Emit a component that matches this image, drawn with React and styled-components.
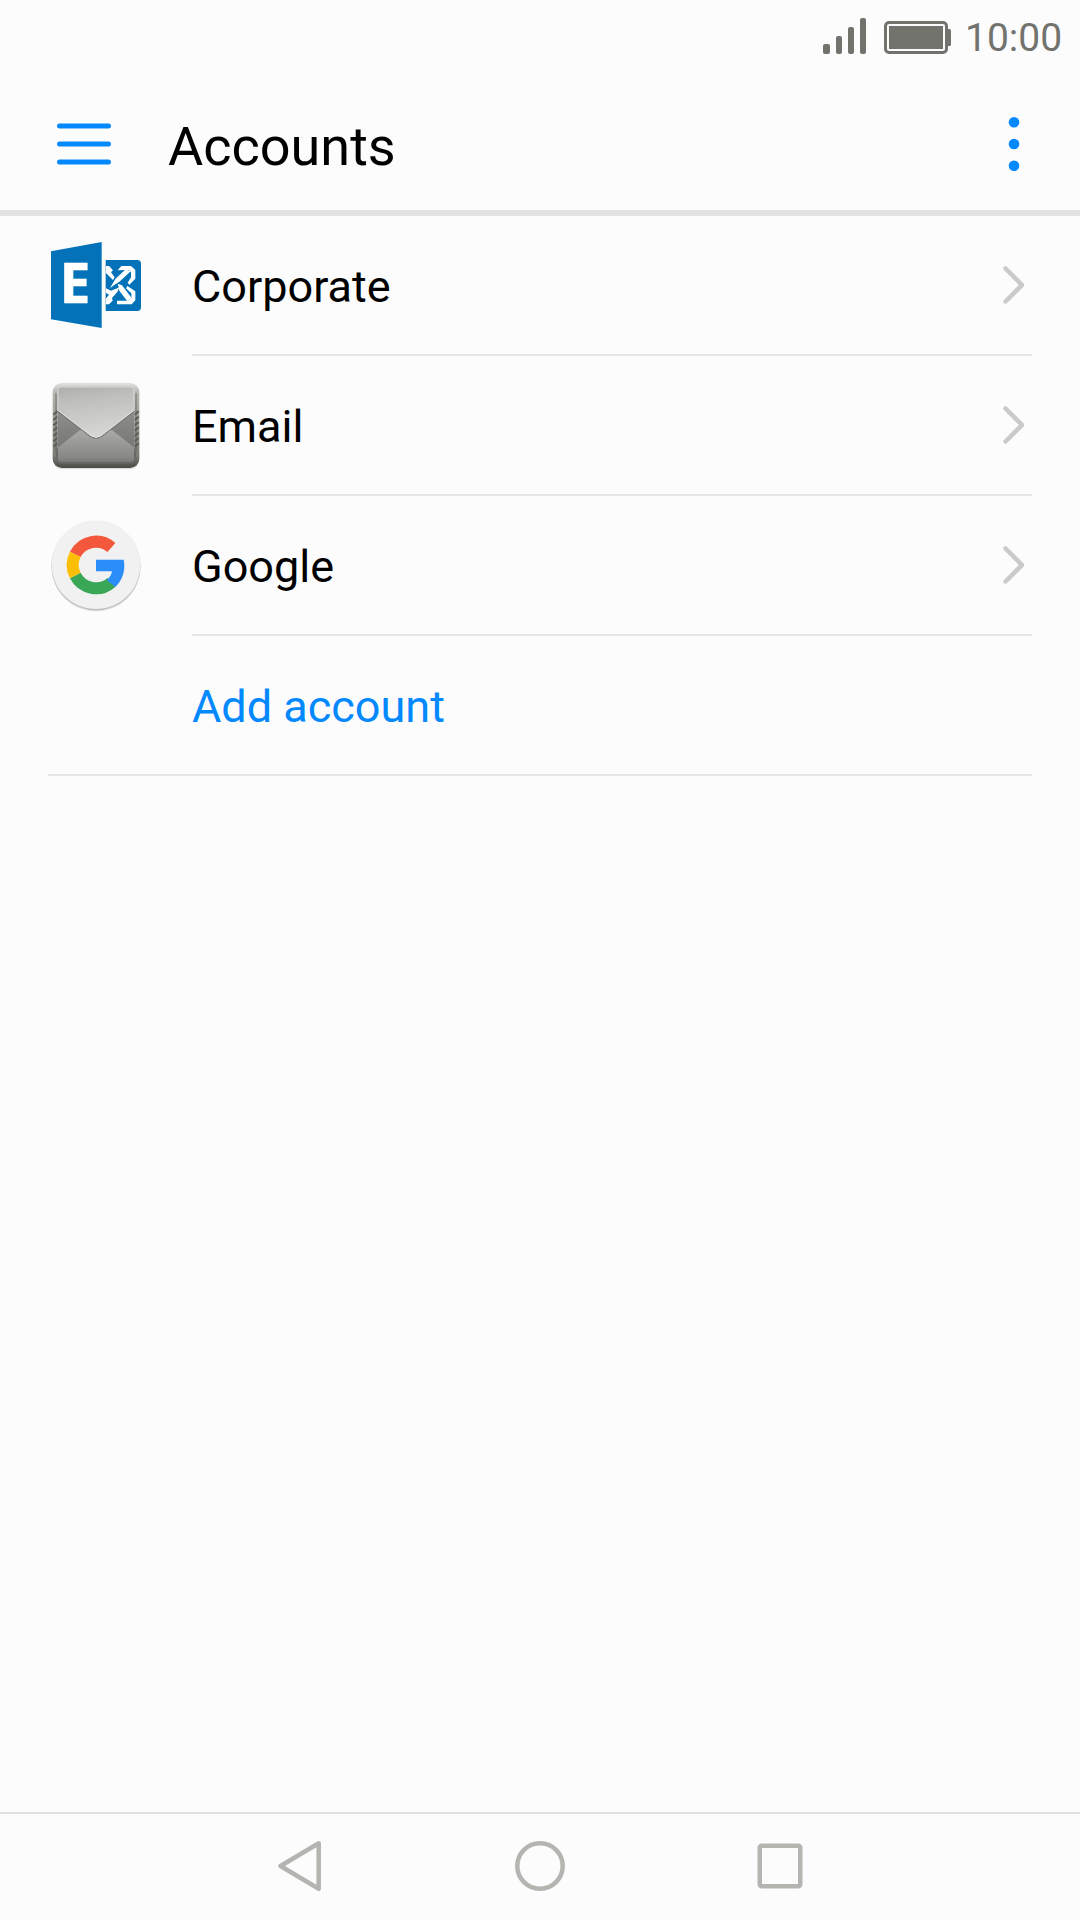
import React from "react";
import styled, { createGlobalStyle } from "styled-components";

const GlobalStyle = createGlobalStyle`
  * {
    box-sizing: border-box;
  }

  body {
    margin: 0;
    background: #fcfcfc;
    font-family: Roboto, "Liberation Sans", sans-serif;
  }

  svg {
    display: block;
    flex-shrink: 0;
  }
`;

const Screen = styled.div`
  width: 1080px;
  height: 1920px;
  display: flex;
  flex-direction: column;
  background: #fcfcfc;
  overflow: hidden;
`;

const StatusBar = styled.div`
  height: 72px;
  padding-right: 18px;
  display: flex;
  align-items: center;
  justify-content: flex-end;
  gap: 14px;
  color: #73736e;
`;

const StatusIcons = styled.div`
  display: flex;
  align-items: flex-end;
  gap: 18px;
`;

const Clock = styled.span`
  width: 97px;
  margin-top: 4px;
  font-size: 39px;
  line-height: 46px;
  white-space: nowrap;
`;

const Header = styled.header`
  height: 144px;
  padding: 6px 60px 0 57px;
  display: flex;
  align-items: center;
  border-bottom: 6px solid #e2e2e2;
`;

const IconButton = styled.button`
  border: 0;
  padding: 0;
  background: none;
  color: #0288ff;
`;

const Title = styled.h1`
  flex: 1;
  margin: 6px 0 0 57px;
  font-size: 54px;
  font-weight: 400;
  line-height: 64px;
  color: #000;
`;

const List = styled.ul`
  flex: 1;
  margin: 0;
  padding: 0 48px 0 40px;
  list-style: none;
`;

const Row = styled.li`
  height: 140px;
  display: flex;
  gap: ${(props) => (props.$action ? "0" : "42px")};
  padding-left: ${(props) => (props.$action ? "8px" : "0")};

  & > svg {
    margin-top: 14px;
  }
`;

const RowBody = styled.div`
  flex: 1;
  display: flex;
  align-items: center;
  justify-content: space-between;
  padding: 0 8px 0 ${(props) => (props.$action ? "144px" : "0")};
  border-bottom: 2px solid #e6e6e6;
`;

const Label = styled.span`
  margin-top: 3px;
  font-size: 45px;
  line-height: 54px;
  color: ${(props) => (props.$action ? "#0288ff" : "#000")};
`;

const NavBar = styled.nav`
  height: 108px;
  padding-bottom: 2px;
  display: flex;
  align-items: center;
  justify-content: center;
  gap: 188px;
  border-top: 2px solid #e0e0e0;
`;

const SignalIcon = () => (
  <svg width="43" height="36" viewBox="0 0 43 36" fill="currentColor">
    <rect x="0" y="26" width="7" height="10" rx="2" />
    <rect x="13" y="18" width="6" height="18" rx="2" />
    <rect x="25" y="9" width="6" height="27" rx="2" />
    <rect x="37" y="0" width="6" height="36" rx="2" />
  </svg>
);

const BatteryIcon = () => (
  <svg width="67" height="33" viewBox="0 0 67 33" fill="currentColor">
    <rect x="1.5" y="1.5" width="61" height="30" rx="3.5" fill="none" stroke="currentColor" strokeWidth="3" />
    <rect x="5" y="5" width="54" height="23" />
    <path d="M64 8h1.5a1.5 1.5 0 0 1 1.5 1.5v14a1.5 1.5 0 0 1-1.5 1.5H64z" />
  </svg>
);

const MenuIcon = () => (
  <svg width="54" height="44" viewBox="0 0 54 44" stroke="currentColor" strokeWidth="5" strokeLinecap="round">
    <path d="M2.5 4h49M2.5 22h49M2.5 40h49" />
  </svg>
);

const MoreIcon = () => (
  <svg width="12" height="56" viewBox="0 0 12 56" fill="currentColor">
    <circle cx="6" cy="6.3" r="5.3" />
    <circle cx="6" cy="28" r="5.3" />
    <circle cx="6" cy="49.7" r="5.3" />
  </svg>
);

const Chevron = () => (
  <svg width="22" height="42" viewBox="0 0 22 42" fill="none" stroke="#cacaca" strokeWidth="4.5" strokeLinecap="round">
    <path d="M3.5 4.5L20 21L3.5 37.5" />
  </svg>
);

const ExchangeIcon = () => (
  <svg width="110" height="110" viewBox="0 0 330 330">
    <defs>
      <clipPath id="tile">
        <rect x="197" y="90" width="106" height="153" />
      </clipPath>
    </defs>
    <path d="M197 90h95q11 0 11 11v131q0 11-11 11h-95z" fill="#0472b8" />
    <g clipPath="url(#tile)">
      {/* hooks on the right edge */}
      <path d="M233 121L244 108H273L286 120V146L268 164L263 158L273 142V126L266 120z" fill="#fff" />
      <path d="M262 168L286 184V211L275 223H231V212H264L274 204V190L258 175z" fill="#fff" />
      {/* crossing blades */}
      <path d="M257 118L272 124L240 154L210 174L226 147z" fill="#fff" />
      <path d="M233 161L246 166L275 204L262 214L238 182z" fill="#fff" />
      <path d="M197 108H207L219 121L213 127L224 142L219 150L197 128z" fill="#fff" />
      <path d="M197 174L213 182L238 172L232 186L216 204L218 212L207 223H197V207L207 194L197 188z" fill="#fff" />
      <path d="M228 161L236 169L229 176L221 168z" fill="#0472b8" />
    </g>
    <path d="M33 64L185 36V294L33 268z" fill="#0472b8" />
    <text x="59" y="220" fontFamily="Open Sans" fontWeight="700" fontSize="164" fill="#fff" stroke="#fff" strokeWidth="2">
      E
    </text>
  </svg>
);

const EmailIcon = () => (
  <svg width="110" height="110" viewBox="0 0 330 330">
    <defs>
      <linearGradient id="case" x1="0" y1="0" x2="0" y2="1">
        <stop offset="0" stopColor="#e4e4e2" />
        <stop offset="0.12" stopColor="#b4b4b1" />
        <stop offset="0.85" stopColor="#7c7c79" />
        <stop offset="1" stopColor="#4a4a47" />
      </linearGradient>
      <linearGradient id="front" x1="0" y1="0" x2="0" y2="1">
        <stop offset="0.5" stopColor="#b0b0ac" />
        <stop offset="0.93" stopColor="#888884" />
        <stop offset="1" stopColor="#777773" />
      </linearGradient>
      <linearGradient id="flap" x1="0" y1="0" x2="0.2" y2="1">
        <stop offset="0" stopColor="#adada9" />
        <stop offset="0.3" stopColor="#bebebb" />
        <stop offset="1" stopColor="#d6d6d3" />
      </linearGradient>
      <linearGradient id="side" x1="0" y1="0" x2="0" y2="1">
        <stop offset="0" stopColor="#8e8e8a" />
        <stop offset="1" stopColor="#777773" />
      </linearGradient>
    </defs>
    <rect x="39" y="44" width="258" height="254" rx="28" fill="#000" opacity="0.12" />
    <rect x="38" y="38" width="260" height="256" rx="28" fill="url(#case)" />
    <path
      d="M40 134l12-10M40 150l12-10M40 166l12-10M40 182l12-10M40 198l12-10M40 214l12-10M40 230l12-10M284 134l12-10M284 150l12-10M284 166l12-10M284 182l12-10M284 198l12-10M284 214l12-10M284 230l12-10"
      stroke="#5d5d5a"
      strokeWidth="6"
    />
    <path d="M48 70v170q0 40 30 42h180q30-2 30-42V70" fill="none" stroke="#5a5a57" strokeWidth="3" opacity="0.7" />
    <rect x="53" y="50" width="230" height="227" rx="8" fill="url(#front)" />
    <path d="M54 122L124 177L54 232zM282 122L212 177L282 232z" fill="url(#side)" />
    <path d="M53 124L153 200q15 9 30 0L283 124" fill="none" stroke="#777773" strokeWidth="4" />
    <path d="M53 60q0-10 10-10h210q10 0 10 10v60l-101 78q-14 8-28 0L53 120z" fill="url(#flap)" />
    <path d="M54 120V60q0-9 9-9h210q9 0 9 9v60" fill="none" stroke="#d8d8d6" strokeWidth="3" />
    <path d="M54 121L154 198q14 8 28 0L282 121" fill="none" stroke="#e4e4e1" strokeWidth="3" />
    <path d="M52 236v34q0 10 10 10h212q10 0 10-10v-34" fill="none" stroke="#666663" strokeWidth="3" />
  </svg>
);

const GoogleIcon = () => (
  <svg width="110" height="110" viewBox="0 0 330 330">
    <circle cx="168" cy="170" r="134" fill="#e2e2e2" />
    <circle cx="168" cy="168" r="133.5" fill="#c2c2c2" />
    <circle cx="168" cy="164" r="133" fill="#f2f1f2" />
    <g fill="none" strokeWidth="36">
      <path d="M105.8 133.1A70 70 0 0 1 214.2 112.4" stroke="#f3583c" />
      <path d="M214.2 217.4A70 70 0 0 1 105.8 196.7" stroke="#3aa757" />
      <path d="M105.8 196.7A70 70 0 0 1 105.8 133.1" stroke="#fdbf05" />
    </g>
    <path d="M168 149H251A88 88 0 0 1 226 231L200 210Q213 201 216 184H168z" fill="#2b8df8" />
  </svg>
);

const BackIcon = () => (
  <svg width="50" height="54" viewBox="0 0 50 54" fill="none" stroke="#b4b4b1" strokeWidth="4.5" strokeLinejoin="round">
    <path d="M43.7 4.2L5.5 27L43.7 49.8z" />
  </svg>
);

const HomeIcon = () => (
  <svg width="54" height="54" viewBox="0 0 54 54" fill="none" stroke="#b4b4b1" strokeWidth="4.5">
    <circle cx="27" cy="27" r="22.7" />
  </svg>
);

const RecentIcon = () => (
  <svg width="50" height="54" viewBox="0 0 50 54" fill="none" stroke="#b4b4b1" strokeWidth="4.5">
    <rect x="4.75" y="6.75" width="40.5" height="40.5" rx="2" />
  </svg>
);

const accounts = [
  { name: "Corporate", Icon: ExchangeIcon },
  { name: "Email", Icon: EmailIcon },
  { name: "Google", Icon: GoogleIcon },
];

const App = () => {
  return (
    <Screen>
      <GlobalStyle />
      <StatusBar>
        <StatusIcons>
          <SignalIcon />
          <BatteryIcon />
        </StatusIcons>
        <Clock>10:00</Clock>
      </StatusBar>
      <Header>
        <IconButton>
          <MenuIcon />
        </IconButton>
        <Title>Accounts</Title>
        <IconButton>
          <MoreIcon />
        </IconButton>
      </Header>
      <List>
        {accounts.map(({ name, Icon }) => (
          <Row key={name}>
            <Icon />
            <RowBody>
              <Label>{name}</Label>
              <Chevron />
            </RowBody>
          </Row>
        ))}
        <Row $action>
          <RowBody $action>
            <Label $action>Add account</Label>
          </RowBody>
        </Row>
      </List>
      <NavBar>
        <BackIcon />
        <HomeIcon />
        <RecentIcon />
      </NavBar>
    </Screen>
  );
};

export default App;
